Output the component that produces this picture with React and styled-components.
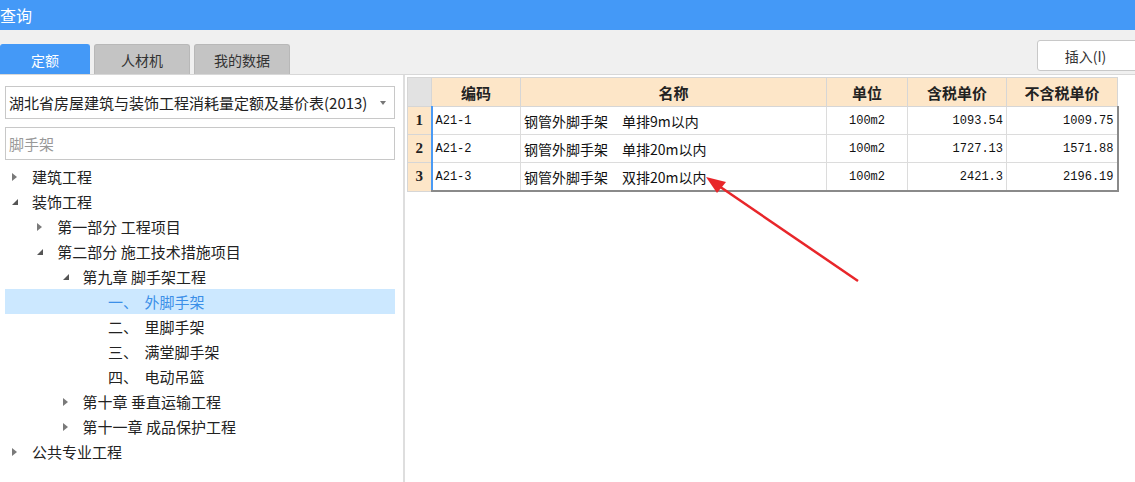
import React from "react"
import styled, { createGlobalStyle } from "styled-components"

const GlobalStyle = createGlobalStyle`
  body {
    margin: 0;
    font-family: "Noto Sans CJK SC", "Noto Sans", sans-serif;
    color: #222;
  }
`

const Page = styled.div`
  position: relative;
  width: 1135px;
  height: 482px;
  display: flex;
  flex-direction: column;
  overflow: hidden;
  background: #fff;
`

const TitleBar = styled.div`
  height: 30px;
  background: #4499f7;
  color: #fff;
  font-size: 16px;
  line-height: 30px;
  padding-left: 0;
`

const Toolbar = styled.div`
  height: 45px;
  background: #f0f0f0;
  border-bottom: 1px solid #d8d8d8;
  box-sizing: border-box;
  display: flex;
  align-items: flex-end;
  justify-content: space-between;
`

const Tabs = styled.div`
  display: flex;
  gap: 4px;
`

const Tab = styled.div`
  width: ${p => (p.$wide ? 96 : 90)}px;
  height: 30px;
  box-sizing: border-box;
  border-radius: 3px 3px 0 0;
  background: ${p => (p.$active ? "#4499f7" : "#c4c4c4")};
  border: 1px solid ${p => (p.$active ? "#4499f7" : "#b8b8b8")};
  border-bottom: none;
  color: ${p => (p.$active ? "#fff" : "#333")};
  font-size: 14px;
  display: flex;
  align-items: center;
  justify-content: center;
`

const InsertButton = styled.button`
  align-self: flex-start;
  margin-top: 10px;
  margin-right: -3px;
  width: 101px;
  height: 31px;
  background: #fff;
  border: 1px solid #c8c8c8;
  border-radius: 3px;
  font-family: "Noto Sans CJK SC", sans-serif;
  font-size: 14px;
  color: #333;
  padding: 0 4px 0 0;
`

const Body = styled.div`
  flex: 1;
  display: flex;
  min-height: 0;
`

const LeftPanel = styled.div`
  width: 405px;
  flex-shrink: 0;
  box-sizing: border-box;
  border-right: 2px solid #dedede;
  padding: 11px 8px 0 5px;
  display: flex;
  flex-direction: column;
`

const Select = styled.div`
  height: 33px;
  box-sizing: border-box;
  border: 1px solid #c8c8c8;
  display: flex;
  align-items: center;
  justify-content: space-between;
  padding: 0 8px 0 3px;
  font-size: 15px;
  color: #222;
  white-space: nowrap;
`

const Caret = styled.span`
  width: 0;
  height: 0;
  border-left: 3px solid transparent;
  border-right: 3px solid transparent;
  border-top: 4px solid #777;
`

const Search = styled.div`
  margin-top: 8px;
  height: 33px;
  box-sizing: border-box;
  border: 1px solid #c8c8c8;
  display: flex;
  align-items: center;
  padding-left: 3px;
  font-size: 15px;
  color: #999;
`

const Tree = styled.div`
  margin-top: 4px;
  display: flex;
  flex-direction: column;
`

const TreeRow = styled.div`
  height: 25px;
  display: flex;
  align-items: center;
  padding-left: ${p => 6 + p.$level * 25.3}px;
  background: ${p => (p.$selected ? "#cce8ff" : "transparent")};
  color: ${p => (p.$selected ? "#3b8fe8" : "#222")};
  font-size: 15px;
  white-space: pre;
`

const Toggle = styled.span`
  width: 21px;
  display: flex;
  align-items: center;
`

const Grid = styled.div`
  flex: 1;
  padding: 2px 0 0 2px;
  background: #fff;
`

const Table = styled.table`
  border-collapse: collapse;
  table-layout: fixed;
  width: 710px;
`

const HeadCell = styled.th`
  height: 28px;
  padding: 0;
  background: ${p => (p.$corner ? "#e2e2e2" : "#fde6c8")};
  border: 1px solid #d6d6d6;
  font-size: 15px;
  font-weight: bold;
  color: #222;
`

const NumCell = styled.td`
  height: 27px;
  padding: 0;
  background: #fde6c8;
  border: 1px solid #d6d6d6;
  text-align: center;
  font-family: "Liberation Serif", serif;
  font-weight: bold;
  font-size: 15px;
`

const Cell = styled.td`
  height: 27px;
  padding: 0 3px;
  border: 1px solid #dcdcdc;
  text-align: ${p => p.$align || "left"};
  font-family: ${p => (p.$cjk ? '"Noto Sans CJK SC", sans-serif' : '"Liberation Mono", monospace')};
  font-size: ${p => (p.$cjk ? 14 : 12)}px;
  color: #111;
  white-space: pre;
  ${p => p.$first && "border-left: 2px solid #4a9af5;"}
  ${p => p.$last && "border-right: 2px solid #8a8a8a;"}
  ${p => p.$top && "border-top: 1px solid #8bbcf0;"}
  ${p => p.$bottom && "border-bottom: 2px solid #8a8a8a;"}
`

const NameGap = styled.span`
  display: inline-block;
  width: 14px;
`

const ArrowLayer = styled.svg`
  position: absolute;
  left: 0;
  top: 0;
  pointer-events: none;
`

const Collapsed = () => (
  <svg width="7" height="10" viewBox="0 0 7 10">
    <path d="M1 1 L6 5 L1 9 Z" fill="#7a7a7a" />
  </svg>
)

const Expanded = () => (
  <svg width="8" height="8" viewBox="0 0 8 8">
    <path d="M7 1 L7 7 L1 7 Z" fill="#555" />
  </svg>
)

const tree = [
  { level: 0, icon: "c", text: "建筑工程" },
  { level: 0, icon: "e", text: "装饰工程" },
  { level: 1, icon: "c", text: "第一部分 工程项目" },
  { level: 1, icon: "e", text: "第二部分 施工技术措施项目" },
  { level: 2, icon: "e", text: "第九章 脚手架工程" },
  { level: 3, text: "一、  外脚手架", selected: true },
  { level: 3, text: "二、  里脚手架" },
  { level: 3, text: "三、  满堂脚手架" },
  { level: 3, text: "四、  电动吊篮" },
  { level: 2, icon: "c", text: "第十章 垂直运输工程" },
  { level: 2, icon: "c", text: "第十一章 成品保护工程" },
  { level: 0, icon: "c", text: "公共专业工程" },
]

const rows = [
  ["A21-1", "钢管外脚手架", "单排9m以内", "100m2", "1093.54", "1009.75"],
  ["A21-2", "钢管外脚手架", "单排20m以内", "100m2", "1727.13", "1571.88"],
  ["A21-3", "钢管外脚手架", "双排20m以内", "100m2", "2421.3", "2196.19"],
]

const App = () => {
  return (
    <Page>
      <GlobalStyle />
      <TitleBar>查询</TitleBar>
      <Toolbar>
        <Tabs>
          <Tab $active>定额</Tab>
          <Tab $wide>人材机</Tab>
          <Tab $wide>我的数据</Tab>
        </Tabs>
        <InsertButton>插入(I)</InsertButton>
      </Toolbar>
      <Body>
        <LeftPanel>
          <Select>
            <span>湖北省房屋建筑与装饰工程消耗量定额及基价表(2013)</span>
            <Caret />
          </Select>
          <Search>脚手架</Search>
          <Tree>
            {tree.map((n, i) => (
              <TreeRow key={i} $level={n.level} $selected={n.selected}>
                <Toggle>
                  {n.icon === "c" && <Collapsed />}
                  {n.icon === "e" && <Expanded />}
                </Toggle>
                {n.text}
              </TreeRow>
            ))}
          </Tree>
        </LeftPanel>
        <Grid>
          <Table>
            <colgroup>
              <col style={{ width: 24 }} />
              <col style={{ width: 89 }} />
              <col style={{ width: 306 }} />
              <col style={{ width: 81 }} />
              <col style={{ width: 99 }} />
              <col style={{ width: 111 }} />
            </colgroup>
            <thead>
              <tr>
                <HeadCell $corner />
                <HeadCell>编码</HeadCell>
                <HeadCell>名称</HeadCell>
                <HeadCell>单位</HeadCell>
                <HeadCell>含税单价</HeadCell>
                <HeadCell>不含税单价</HeadCell>
              </tr>
            </thead>
            <tbody>
              {rows.map((r, i) => {
                const top = i === 0
                const bottom = i === rows.length - 1
                return (
                  <tr key={r[0]}>
                    <NumCell>{i + 1}</NumCell>
                    <Cell $first $top={top} $bottom={bottom}>{r[0]}</Cell>
                    <Cell $cjk $top={top} $bottom={bottom}>
                      {r[1]}
                      <NameGap> </NameGap>
                      {r[2]}
                    </Cell>
                    <Cell $align="center" $top={top} $bottom={bottom}>{r[3]}</Cell>
                    <Cell $align="right" $top={top} $bottom={bottom}>{r[4]}</Cell>
                    <Cell $align="right" $last $top={top} $bottom={bottom}>{r[5]}</Cell>
                  </tr>
                )
              })}
            </tbody>
          </Table>
        </Grid>
      </Body>
      <ArrowLayer width="1135" height="482">
        <line x1="858" y1="281" x2="716" y2="184" stroke="#e8262a" strokeWidth="2.5" />
        <path d="M706 177 L726 182 L717 193 Z" fill="#e8262a" />
      </ArrowLayer>
    </Page>
  )
}

export default App
